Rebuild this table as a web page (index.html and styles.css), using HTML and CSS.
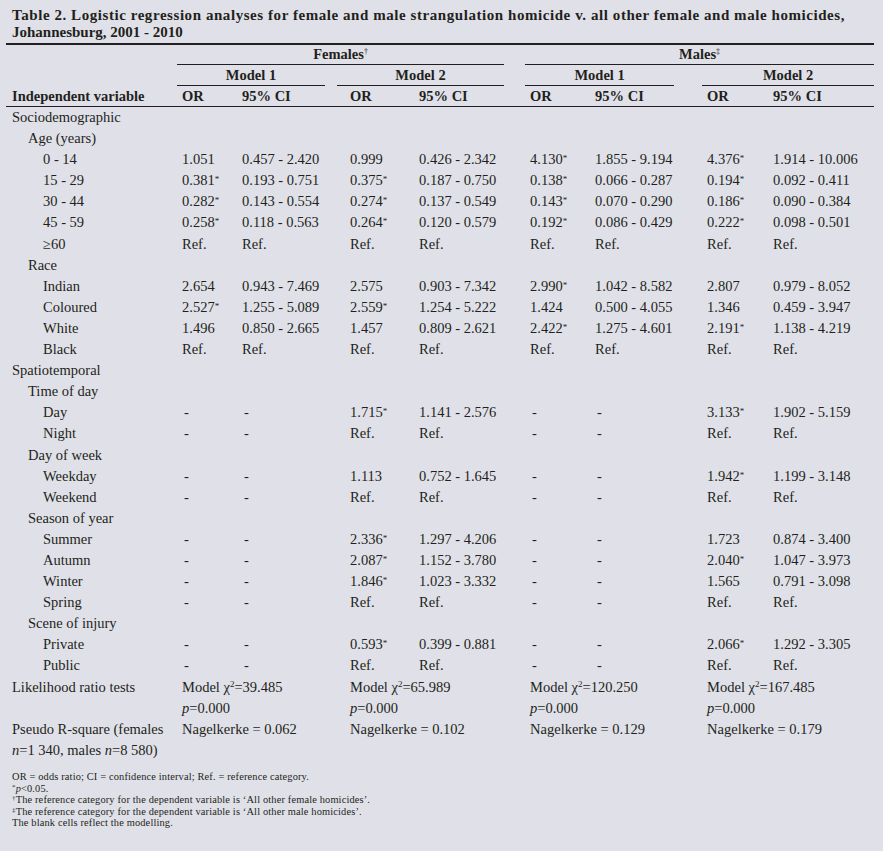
FILE: index.html
```html
<!DOCTYPE html>
<html lang="en">
<head>
<meta charset="utf-8">
<title>Table 2</title>
<link rel="stylesheet" href="styles.css">
</head>
<body>
<div class="page">
  <h1 class="title"><span class="t1">Table 2. Logistic regression analyses for female and male strangulation homicide v. all other female and male homicides,</span><br><span class="t2">Johannesburg, 2001 - 2010</span></h1>
  <table class="tbl">
    <colgroup>
      <col class="c-label"><col class="c-or1"><col class="c-ci1"><col class="c-gap1">
      <col class="c-or2"><col class="c-ci2"><col class="c-gap2">
      <col class="c-or3"><col class="c-ci3"><col class="c-gap3">
      <col class="c-or4"><col class="c-ci4">
    </colgroup>
    <thead>
      <tr class="h1">
        <th></th>
        <th colspan="5" class="grp">Females<sup class="dg">†</sup></th>
        <th></th>
        <th colspan="5" class="grp">Males<sup class="dg">‡</sup></th>
      </tr>
      <tr class="h2">
        <th></th>
        <th colspan="2" class="grp">Model 1</th>
        <th></th>
        <th colspan="2" class="grp">Model 2</th>
        <th></th>
        <th colspan="2" class="grp">Model 1</th>
        <th></th>
        <th colspan="2" class="grp">Model 2</th>
      </tr>
      <tr class="h3">
        <th class="lbl">Independent variable</th>
        <th>OR</th><th>95% CI</th><th></th>
        <th class="x">OR</th><th>95% CI</th><th></th>
        <th>OR</th><th>95% CI</th><th></th>
        <th>OR</th><th>95% CI</th>
      </tr>
    </thead>
    <tbody>
      <tr><td class="l0" colspan="12">Sociodemographic</td></tr>
      <tr><td class="l1" colspan="12">Age (years)</td></tr>
      <tr><td class="l2">0 - 14</td><td>1.051</td><td>0.457 - 2.420</td><td></td><td class="x">0.999</td><td>0.426 - 2.342</td><td></td><td>4.130<sup class="s">*</sup></td><td>1.855 - 9.194</td><td></td><td>4.376<sup class="s">*</sup></td><td>1.914 - 10.006</td></tr>
      <tr><td class="l2">15 - 29</td><td>0.381<sup class="s">*</sup></td><td>0.193 - 0.751</td><td></td><td class="x">0.375<sup class="s">*</sup></td><td>0.187 - 0.750</td><td></td><td>0.138<sup class="s">*</sup></td><td>0.066 - 0.287</td><td></td><td>0.194<sup class="s">*</sup></td><td>0.092 - 0.411</td></tr>
      <tr><td class="l2">30 - 44</td><td>0.282<sup class="s">*</sup></td><td>0.143 - 0.554</td><td></td><td class="x">0.274<sup class="s">*</sup></td><td>0.137 - 0.549</td><td></td><td>0.143<sup class="s">*</sup></td><td>0.070 - 0.290</td><td></td><td>0.186<sup class="s">*</sup></td><td>0.090 - 0.384</td></tr>
      <tr><td class="l2">45 - 59</td><td>0.258<sup class="s">*</sup></td><td>0.118 - 0.563</td><td></td><td class="x">0.264<sup class="s">*</sup></td><td>0.120 - 0.579</td><td></td><td>0.192<sup class="s">*</sup></td><td>0.086 - 0.429</td><td></td><td>0.222<sup class="s">*</sup></td><td>0.098 - 0.501</td></tr>
      <tr><td class="l2">≥60</td><td>Ref.</td><td>Ref.</td><td></td><td class="x">Ref.</td><td>Ref.</td><td></td><td>Ref.</td><td>Ref.</td><td></td><td>Ref.</td><td>Ref.</td></tr>
      <tr><td class="l1" colspan="12">Race</td></tr>
      <tr><td class="l2">Indian</td><td>2.654</td><td>0.943 - 7.469</td><td></td><td class="x">2.575</td><td>0.903 - 7.342</td><td></td><td>2.990<sup class="s">*</sup></td><td>1.042 - 8.582</td><td></td><td>2.807</td><td>0.979 - 8.052</td></tr>
      <tr><td class="l2">Coloured</td><td>2.527<sup class="s">*</sup></td><td>1.255 - 5.089</td><td></td><td class="x">2.559<sup class="s">*</sup></td><td>1.254 - 5.222</td><td></td><td>1.424</td><td>0.500 - 4.055</td><td></td><td>1.346</td><td>0.459 - 3.947</td></tr>
      <tr><td class="l2">White</td><td>1.496</td><td>0.850 - 2.665</td><td></td><td class="x">1.457</td><td>0.809 - 2.621</td><td></td><td>2.422<sup class="s">*</sup></td><td>1.275 - 4.601</td><td></td><td>2.191<sup class="s">*</sup></td><td>1.138 - 4.219</td></tr>
      <tr><td class="l2">Black</td><td>Ref.</td><td>Ref.</td><td></td><td class="x">Ref.</td><td>Ref.</td><td></td><td>Ref.</td><td>Ref.</td><td></td><td>Ref.</td><td>Ref.</td></tr>
      <tr><td class="l0" colspan="12">Spatiotemporal</td></tr>
      <tr><td class="l1" colspan="12">Time of day</td></tr>
      <tr><td class="l2">Day</td><td class="d">-</td><td class="d">-</td><td></td><td class="x">1.715<sup class="s">*</sup></td><td>1.141 - 2.576</td><td></td><td class="d">-</td><td class="d">-</td><td></td><td>3.133<sup class="s">*</sup></td><td>1.902 - 5.159</td></tr>
      <tr><td class="l2">Night</td><td class="d">-</td><td class="d">-</td><td></td><td class="x">Ref.</td><td>Ref.</td><td></td><td class="d">-</td><td class="d">-</td><td></td><td>Ref.</td><td>Ref.</td></tr>
      <tr><td class="l1" colspan="12">Day of week</td></tr>
      <tr><td class="l2">Weekday</td><td class="d">-</td><td class="d">-</td><td></td><td class="x">1.113</td><td>0.752 - 1.645</td><td></td><td class="d">-</td><td class="d">-</td><td></td><td>1.942<sup class="s">*</sup></td><td>1.199 - 3.148</td></tr>
      <tr><td class="l2">Weekend</td><td class="d">-</td><td class="d">-</td><td></td><td class="x">Ref.</td><td>Ref.</td><td></td><td class="d">-</td><td class="d">-</td><td></td><td>Ref.</td><td>Ref.</td></tr>
      <tr><td class="l1" colspan="12">Season of year</td></tr>
      <tr><td class="l2">Summer</td><td class="d">-</td><td class="d">-</td><td></td><td class="x">2.336<sup class="s">*</sup></td><td>1.297 - 4.206</td><td></td><td class="d">-</td><td class="d">-</td><td></td><td>1.723</td><td>0.874 - 3.400</td></tr>
      <tr><td class="l2">Autumn</td><td class="d">-</td><td class="d">-</td><td></td><td class="x">2.087<sup class="s">*</sup></td><td>1.152 - 3.780</td><td></td><td class="d">-</td><td class="d">-</td><td></td><td>2.040<sup class="s">*</sup></td><td>1.047 - 3.973</td></tr>
      <tr><td class="l2">Winter</td><td class="d">-</td><td class="d">-</td><td></td><td class="x">1.846<sup class="s">*</sup></td><td>1.023 - 3.332</td><td></td><td class="d">-</td><td class="d">-</td><td></td><td>1.565</td><td>0.791 - 3.098</td></tr>
      <tr><td class="l2">Spring</td><td class="d">-</td><td class="d">-</td><td></td><td class="x">Ref.</td><td>Ref.</td><td></td><td class="d">-</td><td class="d">-</td><td></td><td>Ref.</td><td>Ref.</td></tr>
      <tr><td class="l1" colspan="12">Scene of injury</td></tr>
      <tr><td class="l2">Private</td><td class="d">-</td><td class="d">-</td><td></td><td class="x">0.593<sup class="s">*</sup></td><td>0.399 - 0.881</td><td></td><td class="d">-</td><td class="d">-</td><td></td><td>2.066<sup class="s">*</sup></td><td>1.292 - 3.305</td></tr>
      <tr><td class="l2">Public</td><td class="d">-</td><td class="d">-</td><td></td><td class="x">Ref.</td><td>Ref.</td><td></td><td class="d">-</td><td class="d">-</td><td></td><td>Ref.</td><td>Ref.</td></tr>
      <tr>
        <td class="l0">Likelihood ratio tests</td>
        <td colspan="2">Model χ<sup class="sq">2</sup>=39.485<br><i>p</i>=0.000</td><td></td>
        <td colspan="2" class="x">Model χ<sup class="sq">2</sup>=65.989<br><i>p</i>=0.000</td><td></td>
        <td colspan="2">Model χ<sup class="sq">2</sup>=120.250<br><i>p</i>=0.000</td><td></td>
        <td colspan="2">Model χ<sup class="sq">2</sup>=167.485<br><i>p</i>=0.000</td>
      </tr>
      <tr>
        <td class="l0">Pseudo R-square (females<br><i>n</i>=1 340, males <i>n</i>=8 580)</td>
        <td colspan="2">Nagelkerke = 0.062</td><td></td>
        <td colspan="2" class="x">Nagelkerke = 0.102</td><td></td>
        <td colspan="2">Nagelkerke = 0.129</td><td></td>
        <td colspan="2">Nagelkerke = 0.179</td>
      </tr>
    </tbody>
  </table>
  <div class="notes">
    <p>OR = odds ratio; CI = confidence interval; Ref. = reference category.</p>
    <p><sup class="ns">*</sup><i>p</i>&lt;0.05.</p>
    <p><sup class="ns">†</sup>The reference category for the dependent variable is ‘All other female homicides’.</p>
    <p><sup class="ns">‡</sup>The reference category for the dependent variable is ‘All other male homicides’.</p>
    <p>The blank cells reflect the modelling.</p>
  </div>
</div>
</body>
</html>
```

FILE: styles.css
```css
html, body {
  margin: 0;
  padding: 0;
  background: #e0e1e8;
}

body {
  font-family: "Liberation Serif", "Times New Roman", serif;
  color: #231f20;
}

.page {
  width: 868px;
  padding: 7px 0 0 6px;
}

.title {
  margin: 0;
  padding-left: 6px;
  font-size: 15px;
  line-height: 17px;
  font-weight: bold;
  white-space: nowrap;
}

.title .t1 { letter-spacing: 0.56px; }

.tbl {
  margin-top: 2px;
  width: 868px;
  table-layout: fixed;
  border-collapse: separate;
  border-spacing: 0;
  border-top: 2px solid #231f20;
  font-size: 14.5px;
}

.c-label { width: 171px; }
.c-or1 { width: 60px; }
.c-ci1 { width: 88px; }
.c-gap1 { width: 12px; }
.c-or2 { width: 77px; }
.c-ci2 { width: 90px; }
.c-gap2 { width: 21px; }
.c-or3 { width: 65px; }
.c-ci3 { width: 84px; }
.c-gap3 { width: 28px; }
.c-or4 { width: 66px; }
.c-ci4 { width: 106px; }

.tbl th,
.tbl td {
  padding: 0 0 0 5px;
  text-align: left;
  vertical-align: top;
  white-space: nowrap;
  overflow: visible;
}

.tbl th {
  font-weight: bold;
  line-height: 20px;
}

.tbl .h1 th { line-height: 19px; }

.tbl th.grp {
  text-align: center;
  padding-left: 0;
  border-bottom: 1px solid #231f20;
}

.tbl .h3 th {
  border-bottom: 1px solid #231f20;
}

.tbl .h3 th.lbl { padding-left: 6px; }

.tbl td {
  font-weight: normal;
  line-height: 21.1px;
}

.tbl .x { padding-left: 13px; }
.tbl .d { padding-left: 7px; }

.tbl td.l0 { padding-left: 6px; }
.tbl td.l1 { padding-left: 22px; }
.tbl td.l2 { padding-left: 37px; }

.dg {
  font-size: 8px;
  line-height: 0;
  vertical-align: 5px;
  font-weight: normal;
}

.s {
  font-size: 9px;
  line-height: 0;
  vertical-align: 3px;
}

.sq {
  font-size: 9px;
  line-height: 0;
  vertical-align: 5px;
}

.notes {
  margin-top: 10px;
  padding-left: 6px;
  font-size: 10.4px;
  line-height: 11.6px;
  letter-spacing: 0.15px;
}

.notes p {
  margin: 0;
}

.ns {
  font-size: 7px;
  line-height: 0;
  vertical-align: 3px;
}
```
